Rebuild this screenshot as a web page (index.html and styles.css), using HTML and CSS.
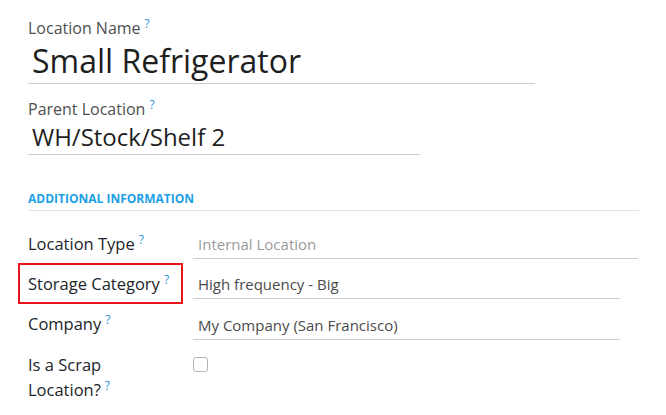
FILE: index.html
```html
<!DOCTYPE html>
<html>
<head>
<meta charset="utf-8">
<link rel="stylesheet" href="styles.css">
</head>
<body>
<div class="sheet">
  <div class="title-field">
    <label class="top-label">Location Name<sup class="help">?</sup></label>
    <div class="name-input">Small Refrigerator</div>
  </div>
  <div class="title-field parent-field">
    <label class="top-label">Parent Location<sup class="help">?</sup></label>
    <div class="parent-input">WH/Stock/Shelf 2</div>
  </div>
  <div class="section-title">ADDITIONAL INFORMATION</div>
  <div class="form-grid">
    <div class="cell-label"><span class="label-text">Location Type<sup class="help">?</sup></span></div>
    <div class="cell-value"><div class="input input-wide muted">Internal Location</div></div>

    <div class="cell-label"><span class="label-text highlight">Storage Category<sup class="help">?</sup></span></div>
    <div class="cell-value"><div class="input">High frequency - Big</div></div>

    <div class="cell-label"><span class="label-text">Company<sup class="help">?</sup></span></div>
    <div class="cell-value"><div class="input input-last">My Company (San Francisco)</div></div>

    <div class="cell-label"><span class="label-text">Is a Scrap<br>Location?<sup class="help">?</sup></span></div>
    <div class="cell-value"><div class="checkbox"></div></div>
  </div>
</div>
</body>
</html>
```
FILE: styles.css
```css
html, body {
  margin: 0;
  padding: 0;
  background: #fff;
}
body {
  font-family: "Open Sans", "Noto Sans", sans-serif;
  color: #212529;
  width: 666px;
  height: 415px;
  overflow: hidden;
}
.sheet {
  padding: 17px 0 0 28px;
}
.title-field {
  display: flex;
  flex-direction: column;
}
.parent-field {
  margin-top: 14px;
}
.top-label {
  font-size: 16px;
  line-height: 22px;
  color: #4f4f4f;
}
.help {
  color: #2a8fd0;
  font-size: 12px;
  line-height: 1;
  vertical-align: baseline;
  position: relative;
  top: -6px;
  margin-left: 4px;
}
.name-input {
  width: 503px;
  padding-left: 4px;
  font-size: 32px;
  line-height: 44px;
  color: #1f1f1f;
  border-bottom: 1px solid #cccccc;
}
.parent-input {
  width: 388px;
  padding-left: 4px;
  font-size: 24px;
  line-height: 34px;
  color: #1f1f1f;
  border-bottom: 1px solid #cccccc;
}
.section-title {
  margin-top: 36px;
  width: 611px;
  font-size: 12px;
  font-weight: 700;
  color: #1aa0e6;
  line-height: 16px;
  padding-bottom: 3px;
  border-bottom: 1px solid #e2e2e2;
}
.form-grid {
  display: grid;
  grid-template-columns: 165px 1fr;
  margin-top: 8px;
}
.cell-label {
  font-size: 16.5px;
  line-height: 25px;
  color: #212529;
  padding-top: 12px;
}
.label-text {
  display: inline-block;
  position: relative;
}
.highlight::after {
  content: "";
  position: absolute;
  left: -10px;
  right: -14px;
  top: -8px;
  bottom: -8px;
  border: 2px solid #e8141a;
}
.input {
  box-sizing: border-box;
  width: 427px;
  height: 40px;
  padding: 10px 0 0 5px;
  font-size: 15px;
  line-height: 30px;
  color: #4a4a4a;
  border-bottom: 1px solid #cccccc;
}
.input-wide {
  width: 445px;
}
.input-last {
  height: 41px;
  padding-top: 11px;
}
.muted {
  color: #9a9a9a;
}
.checkbox {
  margin-top: 17px;
  width: 13px;
  height: 13px;
  border: 1px solid #b5b5b5;
  border-radius: 3px;
}
```
